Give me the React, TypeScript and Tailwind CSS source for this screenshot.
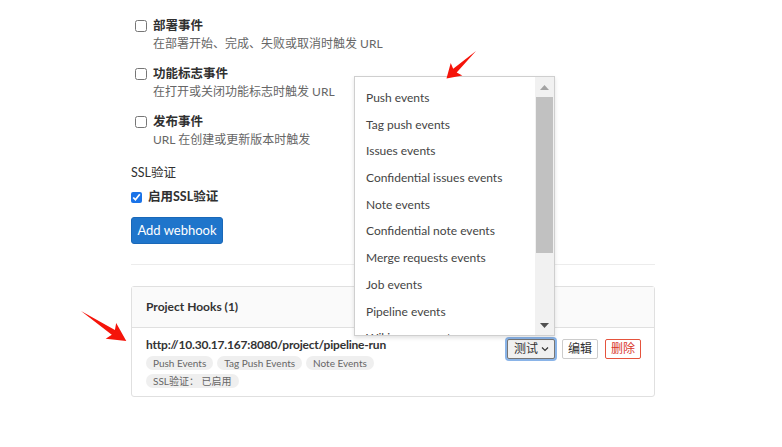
import { useState } from "react";

const font = { fontFamily: 'Lato, "Noto Sans CJK SC", sans-serif' };

const events = [
  { title: "部署事件", desc: "在部署开始、完成、失败或取消时触发 URL" },
  { title: "功能标志事件", desc: "在打开或关闭功能标志时触发 URL" },
  { title: "发布事件", desc: "URL 在创建或更新版本时触发" },
];

const options = [
  "Push events",
  "Tag push events",
  "Issues events",
  "Confidential issues events",
  "Note events",
  "Confidential note events",
  "Merge requests events",
  "Job events",
  "Pipeline events",
  "Wiki page events",
];

// red annotation arrows drawn on top of the screenshot
function Arrows() {
  const shape = "M0 0 L40 -3 L37 -10 L56 0 L37 10 L40 3 Z";
  return (
    <svg className="absolute inset-0 pointer-events-none" width="782" height="447">
      <path d={shape} fill="#f5140a" transform="translate(476 51) rotate(137) scale(0.72 0.85)" />
      <path d={shape} fill="#f5140a" transform="translate(81 311) rotate(33.5) scale(0.97 0.95)" />
    </svg>
  );
}

export default function App() {
  const [ssl, setSsl] = useState(true);

  return (
    <div className="relative w-[782px] h-[447px] bg-white overflow-hidden text-[#303030]" style={font}>
      <div className="w-[524px] ml-[131px] pt-[16px]">
        <div className="flex flex-col gap-[11px] pl-[4px]">
          {events.map((e) => (
            <label key={e.title} className="flex items-start gap-[6px]">
              <input type="checkbox" className="mt-[4px] w-[12px] h-[12px]" />
              <div className="flex flex-col">
                <span className="text-[12.5px] font-bold leading-[19px]">{e.title}</span>
                <span className="text-[12px] text-[#666] leading-[18px]">{e.desc}</span>
              </div>
            </label>
          ))}
        </div>

        <div className="mt-[14px] text-[12.5px] leading-[20px]">SSL验证</div>
        <label className="mt-[4px] flex items-center gap-[6px] text-[12.5px] font-bold leading-[20px]">
          <input
            type="checkbox"
            checked={ssl}
            onChange={() => setSsl(!ssl)}
            className="w-[11px] h-[11px] accent-[#1a73e8]"
          />
          启用SSL验证
        </label>
        <button className="mt-[10px] h-[27px] w-[92px] rounded-[3px] bg-[#1f75cb] text-white text-[13px] border border-[#1a68b8]">
          Add webhook
        </button>

        <div className="mt-[20px] border-t border-[#ececec]" />

        <div className="mt-[21px] border border-[#e0e0e0] rounded-[3px]">
          <div className="h-[41px] bg-[#fafafa] border-b border-[#e0e0e0] flex items-center px-[14px] text-[12px] font-bold text-[#333]">
            Project Hooks (1)
          </div>
          <div className="px-[14px] pt-[8px] pb-[8px] flex justify-between">
            <div className="flex flex-col">
              <span className="text-[12px] font-bold leading-[18px] tracking-[-0.2px] text-[#333]">
                http://10.30.17.167:8080/project/pipeline-run
              </span>
              <div className="mt-[2px] flex gap-[4px]">
                {["Push Events", "Tag Push Events", "Note Events"].map((b) => (
                  <span key={b} className="px-[7px] h-[14px] leading-[14px] rounded-full bg-[#efefef] text-[10px] text-[#666]">
                    {b}
                  </span>
                ))}
              </div>
              <div className="mt-[4px] flex">
                <span className="px-[7px] h-[14px] leading-[14px] rounded-full bg-[#efefef] text-[10px] text-[#666]">
                  SSL验证： 已启用
                </span>
              </div>
            </div>
            <div className="flex items-start gap-[7px] pt-[3px] mr-[-1px]">
              <button className="h-[20px] pl-[6px] pr-[5px] flex items-center gap-[3px] text-[12px] border border-[#767676] rounded-[2px] bg-[#f0f0f0] ring-2 ring-[#8ab4e8] leading-none w-[48px]">
                测试
                <svg width="8" height="6" viewBox="0 0 8 6">
                  <path d="M1 1.5 L4 4.5 L7 1.5" stroke="#333" strokeWidth="1.2" fill="none" />
                </svg>
              </button>
              <button className="h-[20px] px-[5px] text-[12px] border border-[#ccc] rounded-[2px] bg-white leading-none">
                编辑
              </button>
              <button className="h-[20px] px-[5px] text-[12px] border border-[#e5533d] text-[#d9352a] rounded-[2px] bg-white leading-none">
                删除
              </button>
            </div>
          </div>
        </div>
      </div>

      {/* dropdown menu */}
      <div className="absolute left-[354px] top-[76px] w-[201px] h-[260px] bg-white border border-[#cfcfcf] shadow-[0_2px_4px_rgba(0,0,0,0.12)] flex overflow-hidden">
        <ul className="flex-1 pt-[8px] text-[12px] text-[#444]">
          {options.map((o) => (
            <li key={o} className="h-[26.7px] leading-[26.7px] pl-[11px] whitespace-nowrap">
              {o}
            </li>
          ))}
        </ul>
        <div className="w-[19px] bg-[#f1f1f1] flex flex-col items-center">
          <div className="h-[20px] flex items-center justify-center">
            <svg width="9" height="5" viewBox="0 0 9 5">
              <path d="M0 5 L4.5 0 L9 5 Z" fill="#a3a3a3" />
            </svg>
          </div>
          <div className="w-[17px] h-[156px] bg-[#c1c1c1]" />
          <div className="flex-1" />
          <div className="h-[20px] flex items-center justify-center">
            <svg width="9" height="5" viewBox="0 0 9 5">
              <path d="M0 0 L4.5 5 L9 0 Z" fill="#505050" />
            </svg>
          </div>
        </div>
      </div>

      <Arrows />
    </div>
  );
}
